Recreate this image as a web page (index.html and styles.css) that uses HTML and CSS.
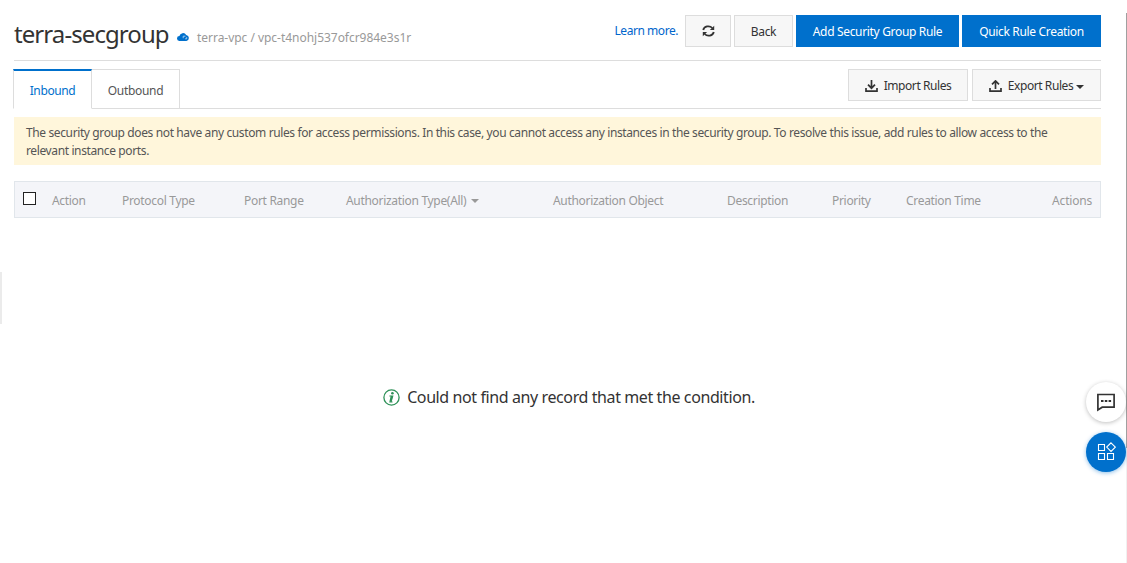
FILE: index.html
```html
<!DOCTYPE html>
<html lang="en">
<head>
<meta charset="utf-8">
<title>Security group rules</title>
<link rel="stylesheet" href="styles.css">
</head>
<body>
<main class="page">
  <header class="header">
    <h1 class="title">terra-secgroup</h1>
    <svg class="cloud" width="12" height="8" viewBox="0 0 12 8"><path d="M2.600 8a2.500 2.500 0 0 1-.2-5A3.700 3.700 0 0 1 9.200 1.900 3.100 3.100 0 0 1 9.400 8z" fill="#0070cc"/><path d="M6.200 5.200V3.200h2.200M8.200 5.800h1.500V4.200" fill="none" stroke="#b9d8f2" stroke-width=".9"/></svg>
    <span class="vpc">terra-vpc / vpc-t4nohj537ofcr984e3s1r</span>
    <div class="actions">
      <a class="learn">Learn more.</a>
      <button class="btn refresh"><svg width="13" height="12" viewBox="0 0 13 12"><path d="M1.200 5A5.200 4.600 0 0 1 10.300 3M11.800 7A5.200 4.600 0 0 1 2.700 9" fill="none" stroke="#333" stroke-width="1.800"/><path d="M12.200.7v4.300H7.900zM.8 11.300V7h4.300z" fill="#333"/></svg></button>
      <button class="btn back">Back</button>
      <button class="btn primary add">Add Security Group Rule</button>
      <button class="btn primary quick">Quick Rule Creation</button>
    </div>
  </header>
  <nav class="tabs">
    <a class="tab active">Inbound</a>
    <a class="tab outbound">Outbound</a>
    <div class="tools">
      <button class="btn import"><svg width="13" height="12" viewBox="0 0 13 12"><path d="M6.5 0v8M3 4.7l3.5 3.5L10 4.7M1 8v3.200h11V8" fill="none" stroke="#333" stroke-width="1.7"/></svg>Import Rules</button>
      <button class="btn export"><svg width="13" height="12" viewBox="0 0 13 12"><path d="M6.5 9V1M3 4.4L6.5.9 10 4.4M1 8v3.200h11V8" fill="none" stroke="#333" stroke-width="1.7"/></svg>Export Rules<i class="caret"></i></button>
    </div>
  </nav>
  <p class="notice">The security group does not have any custom rules for access permissions. In this case, you cannot access any instances in the security group. To resolve this issue, add rules to allow access to the<br>relevant instance ports.</p>
  <div class="thead">
    <span class="check"></span>
    <span>Action</span>
    <span>Protocol Type</span>
    <span>Port Range</span>
    <span class="auth">Authorization Type(All)<i class="caret"></i></span>
    <span>Authorization Object</span>
    <span>Description</span>
    <span>Priority</span>
    <span>Creation Time</span>
    <span class="last">Actions</span>
  </div>
  <div class="empty">
    <svg width="17" height="17" viewBox="0 0 17 17"><circle cx="8.5" cy="8.5" r="7.6" fill="none" stroke="#2e9158" stroke-width="1.3"/><path d="M6.400 7h3.300L8 12.800M6.300 13h3.200" fill="none" stroke="#2e9158" stroke-width="1.200"/><path d="M8.700 7L7.400 12.700" stroke="#2e9158" stroke-width="2"/><circle cx="9.400" cy="4.300" r="1.300" fill="#2e9158"/></svg>
    <span class="message">Could not find any record that met the condition.</span>
  </div>
</main>
<div class="drawer"></div>
<div class="scroll"></div>
<div class="float chat"><svg width="20" height="19" viewBox="0 0 20 19"><path d="M1.900 1.500h16.200v12.700H6.200L1.900 17z" fill="none" stroke="#333" stroke-width="1.700"/><path d="M5 7h2.500v2H5zM8.800 7h2.500v2H8.800zM12.600 7h2.500v2h-2.500z" fill="#333"/></svg></div>
<div class="float apps"><svg width="20" height="20" viewBox="0 0 20 20"><path d="M2.500 2.500h6v6h-6zM2.500 11.500h6v6h-6zM11.500 11.500h6v6h-6zM15 .8l4.300 4.300L15 9.400 10.700 5.100z" fill="none" stroke="#fff" stroke-width="1.100"/></svg></div>
</body>
</html>
```
FILE: styles.css
```css
* { box-sizing: border-box; }
body {
  margin: 0;
  height: 563px;
  overflow: hidden;
  background: #fff;
  color: #333;
  font: 12px/18px "Noto Sans", "Open Sans", sans-serif;
  letter-spacing: -0.38px;
}
.page { width: 1087px; margin-left: 14px; padding-top: 15px; }
.header { display: flex; height: 46px; border-bottom: 1px solid #ddd; white-space: nowrap; }
.title {
  width: 163px;
  margin: 0;
  font: 400 24px/38px "Noto Sans", sans-serif;
  letter-spacing: -0.92px;
}
.cloud { margin-top: 18px; }
.vpc { margin: 14px 0 0 8px; color: #999; letter-spacing: -0.03px; }
.actions { display: flex; gap: 3px; margin-left: auto; }
.learn { margin: 7px 4px 0 0; color: #06c; letter-spacing: -0.45px; }
.btn {
  display: flex;
  align-items: center;
  justify-content: center;
  height: 32px;
  padding: 1px 0 0;
  border: 1px solid #ddd;
  background: #f7f7f7;
  color: #333;
  font: inherit;
  letter-spacing: -0.33px;
  white-space: nowrap;
}
.refresh { width: 46px; padding: 0; }
.back { width: 59px; }
.primary { border-color: #0070cc; background: #0070cc; color: #fff; }
.add { width: 163px; }
.quick { width: 139px; }
.tabs { display: flex; height: 48px; padding-top: 8px; margin-left: -1px; border-bottom: 1px solid #ddd; }
.tab {
  height: 40px;
  padding-top: 12px;
  border: 1px solid #ddd;
  text-align: center;
  color: #555;
}
.active { width: 79px; border-top: 2px solid #0070cc; border-bottom-color: #fff; color: #0070cc; padding-top: 11px; }
.outbound { width: 88px; border-left: 0; letter-spacing: -0.3px; }
.tools { display: flex; gap: 4px; margin-left: auto; }
.tools svg { margin-right: 6px; }
.import, .export { letter-spacing: -0.43px; }
.import { width: 120px; }
.export { width: 129px; }
.caret { width: 0; height: 0; border: 4px solid transparent; border-top-color: currentColor; border-bottom: 0; }
.export .caret { margin: 3px 0 0 3px; }
.notice {
  height: 48px;
  margin: 8px 0 16px;
  padding: 7px 12px 0;
  background: #fff6db;
  color: #555;
  white-space: nowrap;
}
.thead {
  display: grid;
  grid-template-columns: 37px 70px 122px 102px 207px 174px 105px 74px 121px 1fr;
  height: 37px;
  padding-top: 10px;
  border: 1px solid #e1e6eb;
  background: #f4f5f9;
  color: #999;
  letter-spacing: -0.31px;
  white-space: nowrap;
}
.check { width: 13px; height: 13px; margin-left: 8px; border: 1px solid #222; background: #fff; }
.auth .caret { display: inline-block; margin: 0 0 2px 5px; }
.last { padding-right: 8px; text-align: right; letter-spacing: -0.2px; }
.empty { display: flex; align-items: center; justify-content: center; gap: 7px; height: 24px; margin: 167px 0 0 23px; }
.message { font-size: 16px; letter-spacing: -0.4px; }
.drawer { position: absolute; left: 0; top: 272px; width: 2px; height: 52px; background: #ebebeb; }
.scroll { position: absolute; left: 1126px; top: 13px; width: 1px; height: 550px; background: linear-gradient(#a0a0a0 435px, #f0f0f0 435px); }
.float {
  position: absolute;
  left: 1086px;
  display: flex;
  align-items: center;
  justify-content: center;
  width: 40px;
  height: 40px;
  border-radius: 50%;
  box-shadow: 0 1px 4px rgba(0, 0, 0, .25);
}
.chat { top: 382px; background: #fff; }
.apps { top: 432px; background: #0070cc; box-shadow: 0 1px 4px rgba(0, 112, 204, .45); }
```
